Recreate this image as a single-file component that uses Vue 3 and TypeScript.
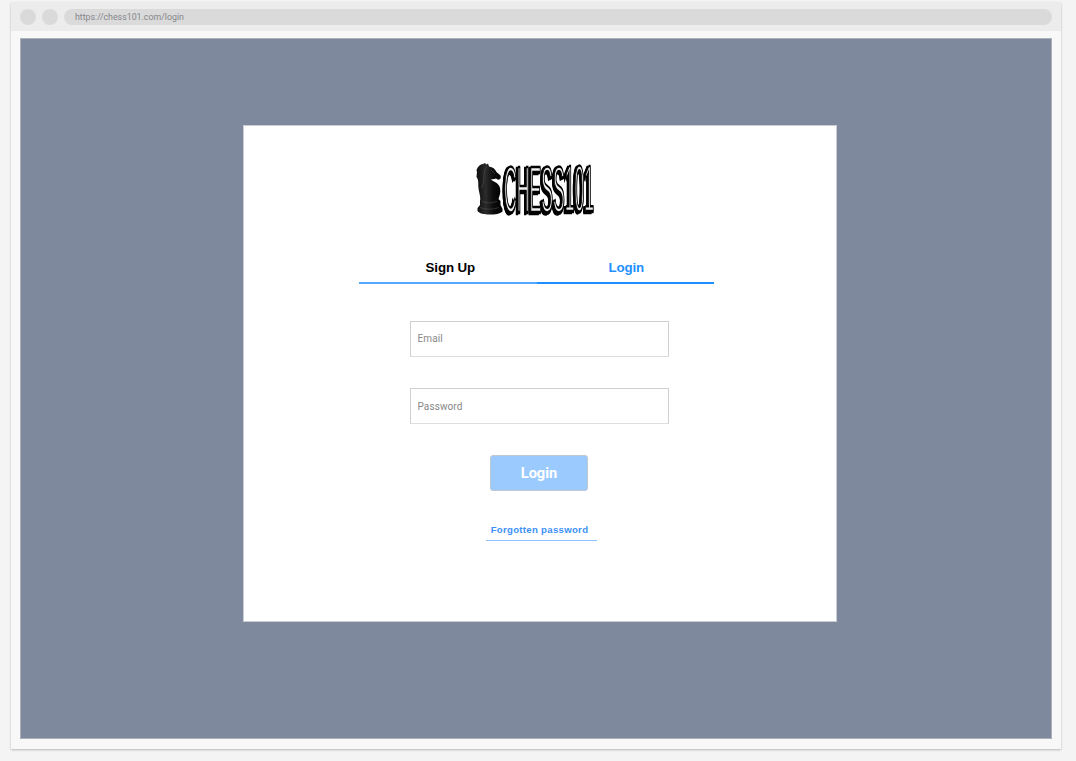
<script setup lang="ts">
import { ref } from 'vue'

const address = 'https://chess101.com/login'
const tabs = ['Sign Up', 'Login']
const activeTab = ref('Login')
const email = ref('')
const password = ref('')
</script>

<template>
  <div class="page">
    <div class="window">
      <header class="bar">
        <span class="dot"></span>
        <span class="dot"></span>
        <div class="address">{{ address }}</div>
      </header>
      <main class="viewport">
        <section class="card">
          <svg class="logo" viewBox="475 160 122 60" role="img" aria-label="CHESS101">
            <defs>
              <linearGradient id="piece" x1="0" x2="1">
                <stop offset="0" stop-color="#0c0c0c" />
                <stop offset=".35" stop-color="#2b2b2b" />
                <stop offset=".65" stop-color="#0c0c0c" />
                <stop offset="1" stop-color="#000" />
              </linearGradient>
            </defs>
            <path fill="url(#piece)" d="M480 201 C481 197 479 193 478.5 188 C478 184 479 180 476.5 177 L477 172 L476.5 170 C478 166 480 164.5 483 164 L485 163 L486.5 164.5 L488 163.5 L489 166.5 C493 167 495 169 496.5 172 L500.5 175.5 C501.5 178 500 180.3 497.5 179.5 L496 178.5 C493.5 179.5 492 179 491 179.5 C494 182 499 183 500 188 C501 192 499.5 196 498.5 199 L500.5 201 L500.5 205 L502.5 209 L502.5 211.5 C500 214 495 214.5 490 214.5 C484 214.5 479 213.5 477.5 211 L477.5 208 L480 205 Z" />
            <path class="shine" d="M487 167 C482 171 486 180 481.5 188 M491 170 L495 174 M482 201.5 Q489 204.5 497 201.5 M480 207.5 Q489 211 499 207.5" />
            <g class="raised">
              <text class="wordmark" transform="translate(504 212) scale(.45 1.66)" font-size="39" textLength="200" lengthAdjust="spacingAndGlyphs">CHESS<tspan dy="-.8">101</tspan></text>
            </g>
          </svg>
          <nav class="tabs">
            <button v-for="tab in tabs" :key="tab" class="tab" :class="{ active: tab === activeTab }" type="button" @click="activeTab = tab">{{ tab }}</button>
          </nav>
          <form class="form" @submit.prevent>
            <input v-model="email" class="field" type="email" placeholder="Email" />
            <input v-model="password" class="field" type="password" placeholder="Password" />
            <button class="submit" type="submit">Login</button>
          </form>
          <a class="forgot">Forgotten password</a>
        </section>
      </main>
    </div>
  </div>
</template>

<style>
body { background: #f4f4f4; }
</style>

<style scoped>
.page, .page * { box-sizing: border-box; }
.page { height: 761px; padding: 2px 15px 0 11px; overflow: hidden; background: #f4f4f4; font-family: Roboto, sans-serif; }
.window { height: 747px; background: #f8f8f8; box-shadow: 0 1px 2px rgba(0, 0, 0, .25); }
.bar { height: 29px; padding: 1px 9px 0; display: flex; align-items: center; background: #ececec; }
.dot { width: 16px; height: 16px; margin-right: 6px; border-radius: 50%; background: #dadada; flex: none; }
.address { flex: 1; height: 16px; padding-left: 11px; border-radius: 8px; background: #dadada; color: #85858c; font-size: 8.8px; line-height: 16px; }
.viewport { height: 701px; margin: 7px 9px 0; padding: 86px 0 0 222px; border: 1px solid #abb0b9; background: #7f899d; }
.card { width: 594px; height: 497px; padding-top: 34px; display: flex; flex-direction: column; align-items: center; background: #fff; border: 1px solid #c9ccd3; }
.logo { width: 122px; height: 60px; margin-left: -8px; flex: none; overflow: visible; }
.shine { fill: none; stroke: #666; stroke-width: .7; opacity: .6; }
.wordmark { font-family: "Liberation Sans", Arial, sans-serif; font-weight: 400; fill: #eee; stroke: #000; stroke-width: 1.5; }
.raised { filter: drop-shadow(-1.2px 1px 0 #000) drop-shadow(.8px 1.6px 0 #000); }
.tabs { width: 355px; height: 32px; margin: 32px 0 0 -7px; display: flex; border-bottom: 2px solid #53a8ff; }
.tab { width: 50%; height: 32px; padding: 0 0 1px 5px; border: 0; background: none; color: #000; font: 700 13.33px/31px "Liberation Sans", Arial, sans-serif; letter-spacing: -.15px; }
.tab.active { color: #1e90ff; padding-left: 2px; border-bottom: 2px solid #1e90ff; }
.form { margin-right: 2px; display: flex; flex-direction: column; align-items: center; }
.field { width: 259px; height: 36px; margin: 37px 0 0; padding: 0 6px 1px 7px; border: 1px solid #d0d0d0; border-bottom-color: #dedede; border-radius: 0; background: #fff; font: 10px Roboto, sans-serif; letter-spacing: .1px; }
.field + .field { margin-top: 31px; padding-bottom: 0; }
.field::placeholder { color: #888; opacity: 1; }
.submit { width: 98px; height: 36px; margin: 31px 0 0 -1px; padding: 0 0 0 1px; border: 1px solid #bfc7d0; border-radius: 3px; background: #9bcaff; color: #fff; font: 700 14.6px Roboto, sans-serif; }
.forgot { width: 111px; height: 19px; margin: 31px 0 0 2px; padding-right: 3px; border-bottom: 1px solid #8bc3ff; color: #3c91f8; font: 700 9.6px/16px "Liberation Sans", Arial, sans-serif; letter-spacing: .3px; text-align: center; white-space: nowrap; }
</style>
